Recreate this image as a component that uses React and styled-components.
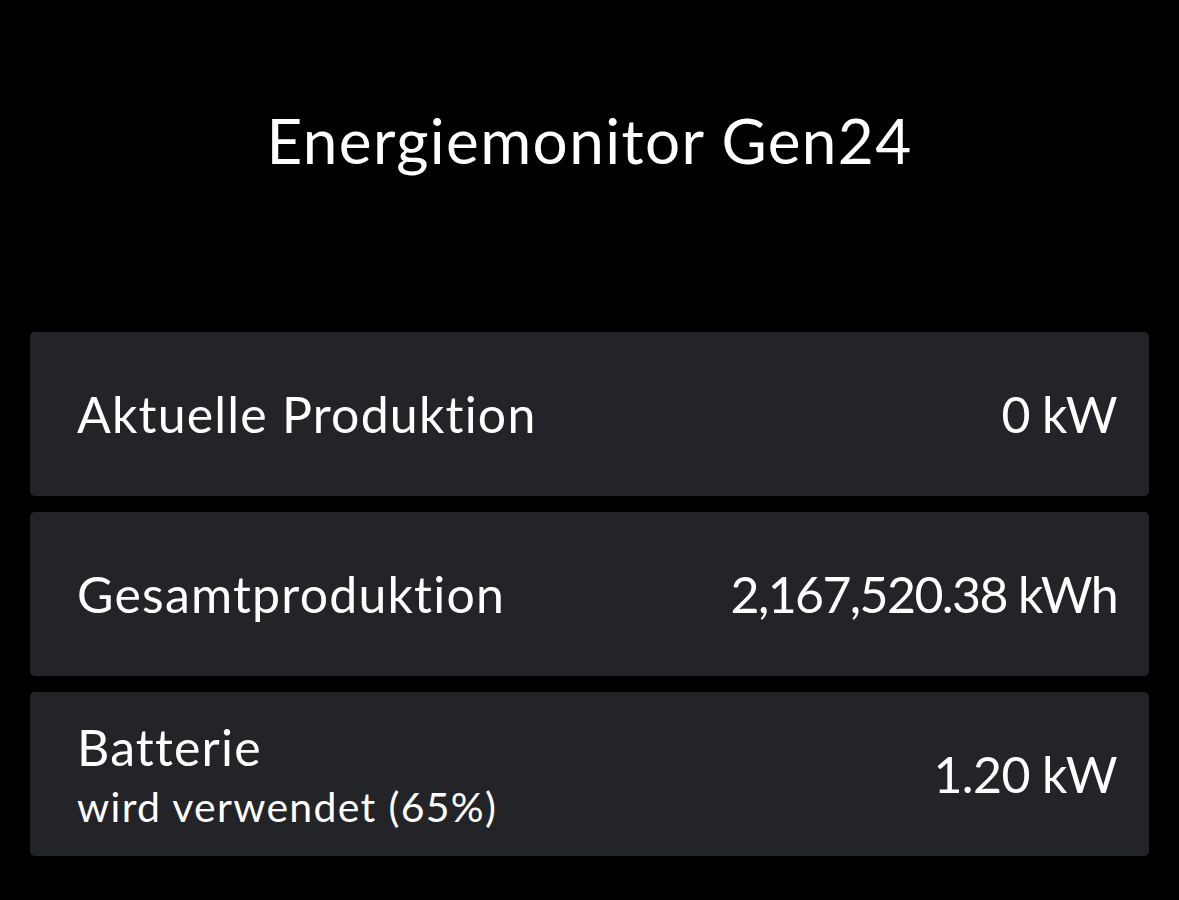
import React from "react"
import styled, { createGlobalStyle } from "styled-components"

const GlobalStyle = createGlobalStyle`
  html, body {
    margin: 0;
    padding: 0;
    background: #000;
  }
  body {
    font-family: Lato, "Open Sans", sans-serif;
    color: #fff;
  }
`

const Page = styled.div`
  width: 1179px;
  height: 900px;
  padding: 0 30px;
  box-sizing: border-box;
  display: flex;
  flex-direction: column;
`

const Header = styled.header`
  height: 332px;
  display: flex;
  justify-content: center;
  padding-top: 104px;
  box-sizing: border-box;
`

const Title = styled.h1`
  margin: 0;
  font-size: 62px;
  font-weight: 400;
  line-height: 72px;
  letter-spacing: 1.4px;
`

const CardList = styled.div`
  display: flex;
  flex-direction: column;
  gap: 16px;
`

const Card = styled.div`
  height: 164px;
  background: #222427;
  border-radius: 5px;
  display: flex;
  align-items: center;
  justify-content: space-between;
  padding: 0 32px 0 47px;
  box-sizing: border-box;
`

const LabelBlock = styled.div`
  display: flex;
  flex-direction: column;
`

const Label = styled.span`
  font-size: 50px;
  line-height: 60px;
  letter-spacing: 1.2px;
`

const SubLabel = styled.span`
  font-size: 41px;
  line-height: 48px;
  margin-top: 6px;
  letter-spacing: 1.3px;
`

const Value = styled.span`
  font-size: 50px;
  line-height: 60px;
  letter-spacing: ${p => (p.$long ? "-1.6px" : "-0.6px")};
`

const rows = [
  { label: "Aktuelle Produktion", value: "0 kW" },
  { label: "Gesamtproduktion", value: "2,167,520.38 kWh" },
  { label: "Batterie", sub: "wird verwendet (65%)", value: "1.20 kW" }
]

const App = () => {
  return (
    <Page>
      <GlobalStyle />
      <Header>
        <Title>Energiemonitor Gen24</Title>
      </Header>
      <CardList>
        {rows.map(row => (
          <Card key={row.label}>
            <LabelBlock>
              <Label>{row.label}</Label>
              {row.sub && <SubLabel>{row.sub}</SubLabel>}
            </LabelBlock>
            <Value $long={row.value.length > 10}>{row.value}</Value>
          </Card>
        ))}
      </CardList>
    </Page>
  )
}

export default App
